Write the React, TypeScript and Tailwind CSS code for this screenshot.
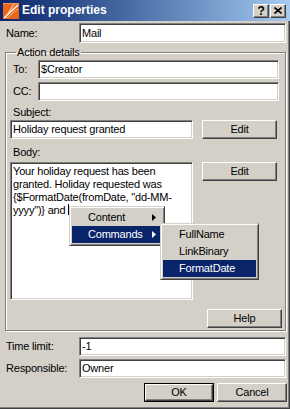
import React from "react";

const sunken =
  "bg-white border border-t-[#808080] border-l-[#808080] border-b-white border-r-white shadow-[inset_1px_1px_0_#404040,inset_-1px_-1px_0_#d4d0c8]";
const raised =
  "bg-[#d4d0c8] border border-t-white border-l-white border-b-[#404040] border-r-[#404040] shadow-[inset_-1px_-1px_0_#808080] flex items-center justify-center";

function Field({ value, className }: { value?: string; className: string }) {
  return (
    <div className={`${sunken} ${className} flex items-center pl-[2px] whitespace-nowrap`}>
      {value}
    </div>
  );
}

function Arrow() {
  return (
    <svg width="4" height="7" viewBox="0 0 4 7" className="absolute right-[6px] top-[5px]">
      <path d="M0 0 L4 3.5 L0 7 Z" fill="currentColor" />
    </svg>
  );
}

function MenuItem({ label, active, sub }: { label: string; active?: boolean; sub?: boolean }) {
  return (
    <div
      className={`relative h-[17px] flex items-center pl-[16px] whitespace-nowrap ${
        active ? "bg-[#0a246a] text-white" : ""
      }`}
    >
      {label}
      {sub && <Arrow />}
    </div>
  );
}

function TitleBar() {
  return (
    <div className="h-[21px] shrink-0 flex items-center bg-linear-to-r from-[#0a246a] to-[#a6caf0]">
      <svg width="16" height="16" viewBox="0 0 16 16" className="ml-[3px]">
        <rect width="16" height="16" fill="#e8671c" />
        <rect x="0" y="0" width="16" height="1" fill="#f59a5c" />
        <path d="M1 15 L15 2" stroke="white" strokeWidth="1.4" />
        <path d="M2 15 L11 1" stroke="#fde0c8" strokeWidth="1" />
        <path d="M4 15 L15 6" stroke="#f7b080" strokeWidth="1" />
      </svg>
      <span className="ml-[3px] text-white font-bold text-[12px] tracking-normal">Edit properties</span>
      <div className="ml-auto mr-[4px] flex gap-[1px]">
        <div className={`${raised} w-[16px] h-[14px] font-bold text-[12px] leading-none`}>?</div>
        <div className={`${raised} w-[16px] h-[14px]`}>
          <svg width="8" height="7" viewBox="0 0 8 7">
            <path d="M0.5 0.5 L7.5 6.5 M7.5 0.5 L0.5 6.5" stroke="black" strokeWidth="1.6" />
          </svg>
        </div>
      </div>
    </div>
  );
}

export default function App() {
  return (
    <div className="relative w-[290px] h-[409px] overflow-hidden flex flex-col bg-[#d4d0c8] text-black text-[11px] leading-[13px] tracking-[-0.2px] font-['Liberation_Sans',Arial,sans-serif]">
      <TitleBar />
      <div className="flex-1 flex flex-col border-r border-b border-[#404040] shadow-[inset_-1px_-1px_0_#808080]">
        <div className="mt-[2px] flex items-center">
          <div className="w-[79px] pl-[6px]">Name:</div>
          <Field value="Mail" className="w-[207px] h-[20px]" />
        </div>

        <fieldset className="mt-[3px] ml-[5px] w-[281px] border border-[#808080] shadow-[inset_1px_1px_0_white,1px_1px_0_white] pl-[4px] pb-[2px]">
          <legend className="ml-[6px] px-[1px]">Action details</legend>
          <div className="mt-[1px] flex items-center">
            <div className="w-[28px] pl-[3px]">To:</div>
            <Field value="$Creator" className="w-[241px] h-[19px]" />
          </div>
          <div className="mt-[3px] flex items-center">
            <div className="w-[28px] pl-[3px]">CC:</div>
            <Field className="w-[241px] h-[19px]" />
          </div>
          <div className="mt-[5px] pl-[3px]">Subject:</div>
          <div className="mt-[1px] flex">
            <Field value="Holiday request granted" className="w-[183px] h-[19px]" />
            <div className={`${raised} ml-[9px] w-[75px] h-[19px]`}>Edit</div>
          </div>
          <div className="mt-[7px] pl-[3px]">Body:</div>
          <div className="mt-[3px] flex items-start">
            <div className={`${sunken} w-[183px] h-[138px] px-[2px] pt-[2px] whitespace-nowrap`}>
              Your holiday request has been
              <br />
              granted. Holiday requested was
              <br />
              {'{$FormatDate(fromDate, "dd-MM-'}
              <br />
              {'yyyy")} and '}
              <span className="inline-block w-px h-[11px] bg-black align-[-1px]" />
            </div>
            <div className={`${raised} ml-[9px] w-[75px] h-[19px]`}>Edit</div>
          </div>
          <div className="mt-[9px] ml-[197px]">
            <div className={`${raised} w-[75px] h-[19px]`}>Help</div>
          </div>
        </fieldset>

        <div className="mt-[6px] flex items-center">
          <div className="w-[79px] pl-[6px]">Time limit:</div>
          <Field value="-1" className="w-[207px] h-[19px]" />
        </div>
        <div className="mt-[3px] flex items-center">
          <div className="w-[79px] pl-[6px]">Responsible:</div>
          <Field value="Owner" className="w-[207px] h-[19px]" />
        </div>
        <div className="mt-[5px] flex pl-[144px] gap-[3px]">
          <div className="w-[70px] h-[19px] border border-black">
            <div className={`${raised} w-full h-full`}>OK</div>
          </div>
          <div className={`${raised} w-[70px] h-[19px]`}>Cancel</div>
        </div>
      </div>

      {/* context menu */}
      <div className="absolute left-[69px] top-[206px] w-[96px] border border-t-[#d4d0c8] border-l-[#d4d0c8] border-b-[#404040] border-r-[#404040] shadow-[inset_1px_1px_0_white,inset_-1px_-1px_0_#808080] bg-[#d4d0c8] p-[2px]">
        <MenuItem label="Content" sub />
        <MenuItem label="Commands" sub active />
      </div>
      <div className="absolute left-[160px] top-[223px] w-[99px] border border-t-[#d4d0c8] border-l-[#d4d0c8] border-b-[#404040] border-r-[#404040] shadow-[inset_1px_1px_0_white,inset_-1px_-1px_0_#808080] bg-[#d4d0c8] p-[2px]">
        <MenuItem label="FullName" />
        <MenuItem label="LinkBinary" />
        <MenuItem label="FormatDate" active />
      </div>
    </div>
  );
}
